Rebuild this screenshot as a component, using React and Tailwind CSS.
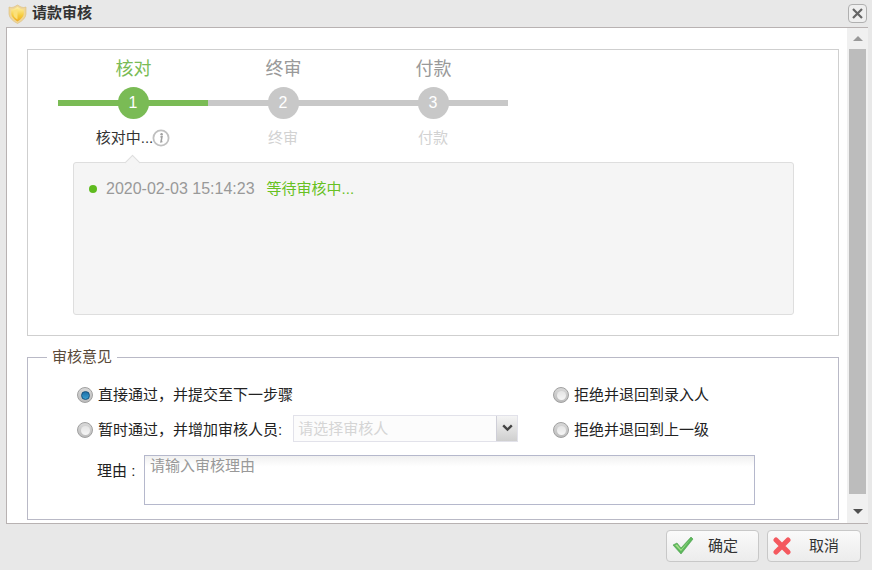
import React from 'react';

const FONT = 'font-["Liberation_Sans","Noto_Sans_CJK_SC",sans-serif]';

const steps = [
  { no: 1, title: '核对', sub: '核对中...', active: true },
  { no: 2, title: '终审', sub: '终审' },
  { no: 3, title: '付款', sub: '付款' },
];

function Shield() {
  return (
    <svg width="19" height="20" viewBox="0 0 19 20" className="shrink-0">
      <defs>
        <linearGradient id="sh" x1="0" y1="0" x2="0" y2="1">
          <stop offset="0" stopColor="#fff2a8" />
          <stop offset="0.6" stopColor="#f6cb3c" />
          <stop offset="1" stopColor="#eeab22" />
        </linearGradient>
      </defs>
      <path d="M9.5 1 L13 3 Q16 4.2 18 3 L18 10 Q17.5 15.5 9.5 19.5 Q1.5 15.5 1 10 L1 3 Q3 4.2 6 3 Z" fill="#f0d698" stroke="#dcbc78" strokeWidth="0.6" />
      <path d="M9.5 3 L12.4 4.8 Q14.4 5.8 15.8 5.4 L15.8 10 Q15.2 14 9.5 17.4 Q3.8 14 3.2 10 L3.2 5.4 Q4.6 5.8 6.6 4.8 Z" fill="url(#sh)" />
      <path d="M9.5 5 L9.5 15.6 Q5.4 13 5.4 10 L5.4 6.8 Q7.4 6.6 9.5 5 Z" fill="#fbe07a" />
    </svg>
  );
}

function InfoIcon() {
  return (
    <svg width="18" height="18" viewBox="0 0 18 18" className="shrink-0 -ml-[1px]">
      <circle cx="9" cy="9" r="7.6" fill="#fff" stroke="#c0c0c0" strokeWidth="1.8" />
      <circle cx="9.6" cy="5.2" r="1.2" fill="#a0a0a0" />
      <path d="M8.4 8 L10 7.7 L9 12.8 L10.4 12.5" fill="none" stroke="#a0a0a0" strokeWidth="1.5" />
    </svg>
  );
}

function Step({ step }) {
  return (
    <div className="w-[150px] flex flex-col items-center">
      <div className={`h-[36px] pt-[3px] pl-[1px] text-[18px] leading-[30px] ${step.active ? 'text-[#7abb55]' : 'text-[#999]'}`}>{step.title}</div>
      <div className="relative w-full h-[32px] flex items-center justify-center">
        <div className={`absolute left-0 right-0 top-[13px] h-[6px] ${step.active ? 'bg-[#7abb55]' : 'bg-[#c8c8c8]'}`} />
        <div className={`relative w-[31px] h-[32px] rounded-full flex items-center justify-center text-white text-[16px] ${step.active ? 'bg-[#7abb55]' : 'bg-[#c8c8c8]'}`}>
          {step.no}
        </div>
      </div>
      <div className={`mt-[9px] h-[20px] flex items-center text-[15px] leading-[20px] ${step.active ? 'text-[#333]' : 'text-[#d2d2d2]'}`}>
        {step.sub}
        {step.active && <InfoIcon />}
      </div>
    </div>
  );
}

function Radio({ checked }) {
  return (
    <span className="w-[16px] h-[16px] shrink-0 rounded-full border border-[#a0a0a0] bg-gradient-to-b from-[#d8d8d8] to-[#bdbdbd] flex items-center justify-center">
      <span className={`w-[9px] h-[9px] rounded-full ${checked ? 'bg-gradient-to-b from-[#1f6fa8] to-[#3a9fd0] border border-[#14527f]' : 'bg-gradient-to-b from-[#e4e4e4] to-[#f6f6f6]'}`} />
    </span>
  );
}

function RadioRow({ checked, children }) {
  return (
    <div className="flex items-center gap-[5px] text-[15px] leading-[20px] text-[#222]">
      <Radio checked={checked} />
      {children}
    </div>
  );
}

function FootButton({ icon, label, width }) {
  return (
    <button className={`${width} h-[32px] flex items-center rounded-[4px] border border-[#c8c8c8] bg-gradient-to-b from-[#fafafa] to-[#ececec] text-[15px] text-[#333]`}>
      <span className="w-[41px] pl-[5px] flex items-center">{icon}</span>
      <span>{label}</span>
    </button>
  );
}

export default function App() {
  return (
    <div className={`${FONT} w-[872px] h-[570px] bg-[#e8e8e8] flex flex-col overflow-hidden`}>
      {/* title bar */}
      <div className="h-[27px] flex items-center pl-[8px] pr-[5px]">
        <Shield />
        <span className="ml-[5px] text-[15px] font-bold text-[#333]">请款审核</span>
        <button className="ml-auto w-[19px] h-[19px] rounded-[4px] border border-[#b0b0b0] bg-[#efefef] flex items-center justify-center">
          <svg width="13" height="13" viewBox="0 0 13 13">
            <path d="M2 2 L11 11 M11 2 L2 11" stroke="#666" strokeWidth="2.2" />
          </svg>
        </button>
      </div>

      {/* body */}
      <div className="ml-[6px] w-[862px] h-[497px] border-y border-l border-[#b8b2b2] bg-white flex">
        <div className="flex-1 pl-[20px] pr-[8px] pt-[21px] flex flex-col">
          <div className="h-[287px] border border-[#cfcfcf] pl-[30px] pt-[1px]">
            <div className="flex">
              {steps.map((s) => <Step key={s.no} step={s} />)}
            </div>
            <div className="relative ml-[15px] mt-[14px] w-[721px] h-[153px] rounded-[3px] border border-[#dedede] bg-[#f5f5f5] pl-[15px] pt-[16px]">
              <div className="absolute left-[53px] top-[-6px] w-[11px] h-[11px] rotate-45 bg-[#f5f5f5] border-l border-t border-[#dedede]" />
              <div className="flex items-center h-[20px]">
                <span className="w-[8px] h-[8px] rounded-full bg-[#5fbb1f]" />
                <span className="ml-[9px] text-[16px] text-[#999]">2020-02-03 15:14:23</span>
                <span className="ml-[12px] text-[15px] text-[#67c122]">等待审核中...</span>
              </div>
            </div>
          </div>

          <fieldset className="mt-[11px] h-[173px] border border-[#b9b9c6] pl-[49px]">
            <legend className="ml-[-30px] px-[5px] text-[15px] leading-[20px] text-[#5a4a3a]">审核意见</legend>
            <div className="flex mt-[14px] h-[28px] items-center">
              <div className="w-[476px]"><RadioRow checked>直接通过，并提交至下一步骤</RadioRow></div>
              <RadioRow>拒绝并退回到录入人</RadioRow>
            </div>
            <div className="flex mt-[7px] h-[28px] items-center">
              <div className="w-[476px] flex items-center">
                <RadioRow>暂时通过，并增加审核人员:</RadioRow>
                <div className="ml-[11px] mb-[4px] w-[225px] h-[27px] flex border border-[#e2e2ea] bg-[#fcfcfc]">
                  <span className="flex-1 pl-[4px] text-[15px] leading-[25px] text-[#d5d5d5]">请选择审核人</span>
                  <span className="w-[21px] border-l border-[#cfcfd8] bg-gradient-to-b from-[#f4f4f4] to-[#cfcfcf] flex items-center justify-center">
                    <svg width="11" height="8" viewBox="0 0 11 8">
                      <path d="M1.2 1.4 L5.5 5.6 L9.8 1.4" fill="none" stroke="#444" strokeWidth="2.4" />
                    </svg>
                  </span>
                </div>
              </div>
              <RadioRow>拒绝并退回到上一级</RadioRow>
            </div>
            <div className="flex mt-[11px] items-start">
              <label className="w-[67px] pl-[20px] pt-[6px] text-[15px] leading-[20px] text-[#222]">理由 :</label>
              <div className="w-[611px] h-[50px] border border-[#b5b8cc] bg-gradient-to-b from-[#f0f0f0] via-white via-[22%] to-white pl-[5px] text-[15px] leading-[20px] text-[#999]">
                请输入审核理由
              </div>
            </div>
          </fieldset>
        </div>

        {/* scrollbar */}
        <div className="w-[21px] bg-[#f0f0f0] pl-[2px] flex flex-col">
          <div className="w-[17px] h-[21px] flex items-center justify-center">
            <span className="border-x-[5px] border-x-transparent border-b-[5px] border-b-[#999]" />
          </div>
          <div className="w-[17px] h-[445px] bg-[#bcbcbc]" />
          <div className="w-[17px] flex-1 pt-[5px] flex items-center justify-center">
            <span className="border-x-[5px] border-x-transparent border-t-[5px] border-t-[#505050]" />
          </div>
        </div>
      </div>

      {/* footer */}
      <div className="flex justify-end gap-[8px] pt-[6px] pr-[11px]">
        <FootButton
          width="w-[93px]"
          label="确定"
          icon={
            <svg width="22" height="20" viewBox="0 0 22 20">
              <path d="M1 9 L5 7 L9 12 L19 1 L21 3 L9 18 Z" fill="#5cb85c" stroke="#4a9e4a" strokeWidth="0.6" />
              <path d="M3 9 L5 8.4 L9 13.4 L19 2.6 L9 15 Z" fill="#a8e08a" />
            </svg>
          }
        />
        <FootButton
          width="w-[94px]"
          label="取消"
          icon={
            <svg width="18" height="18" viewBox="0 0 18 18">
              <path d="M3 3 L15 15 M15 3 L3 15" stroke="#f4595f" strokeWidth="5" strokeLinecap="round" />
            </svg>
          }
        />
      </div>
    </div>
  );
}
